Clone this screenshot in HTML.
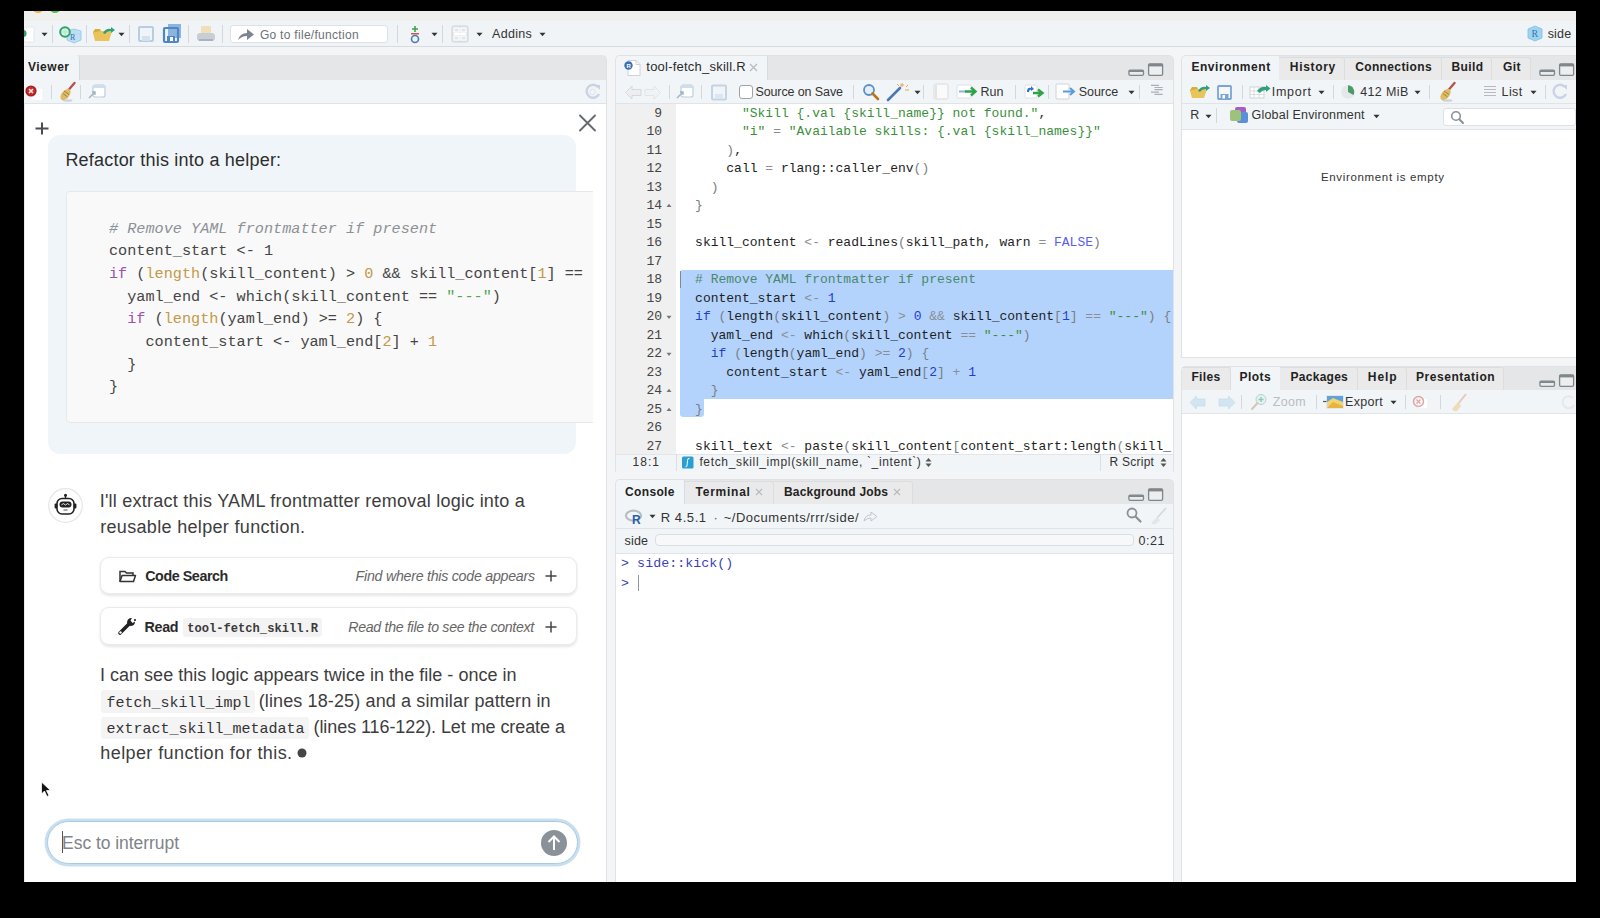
<!DOCTYPE html>
<html><head><meta charset="utf-8"><title>RStudio</title>
<style>
html,body{margin:0;padding:0;}
body{width:1600px;height:918px;background:#000;position:relative;overflow:hidden;font-family:"Liberation Sans",sans-serif;color:#333;}
div{position:absolute;white-space:nowrap;box-sizing:border-box;}
span{white-space:pre;}
svg{overflow:hidden}
</style></head><body>
<div style="left:24px;top:11px;width:1552px;height:871px;background:#f3f5f7"></div>
<div style="left:24px;top:11px;width:1552px;height:10.5px;background:#efefee;border-bottom:1px solid #e0e0e0;box-sizing:border-box"></div>
<svg style="position:absolute;left:24px;top:11px;" width="60" height="4" viewBox="0 0 60 4"><ellipse cx="14" cy="-2" rx="5" ry="4" fill="#f2b43a"/><ellipse cx="31" cy="-2" rx="5" ry="4" fill="#4fc24a"/></svg>
<div style="left:24px;top:21px;width:1552px;height:26px;background:#f1f4f6;border-bottom:1px solid #d6dbdf;box-sizing:border-box"></div>
<svg style="position:absolute;left:24px;top:24px;" width="16" height="20" viewBox="0 0 16 20"><rect x="0" y="3" width="10" height="15" rx="1" fill="#fff" stroke="#e6e6e6"/><circle cx="-1" cy="9.5" r="3.6" fill="#2fa36a"/></svg>
<svg style="position:absolute;left:40.5px;top:32px;" width="7" height="5" viewBox="0 0 7 5"><path d="M0.5 0.8 L6.5 0.8 L3.5 4.2 Z" fill="#333"/></svg>
<div style="left:52px;top:25px;width:1px;height:18px;background:#d4d8dc"></div>
<svg style="position:absolute;left:57px;top:24px;" width="26" height="20" viewBox="0 0 26 20"><path d="M10 7 L17 5 L24 7 L24 16 L17 19 L10 16 Z" fill="#bfe0f4" stroke="#8cc6e6" stroke-width="0.8"/><path d="M17 5 V19 M10 10 L24 10" stroke="#a8d4ee" stroke-width="0.6"/><text x="13" y="15.5" font-size="8" fill="#3d6ea8" font-family="Liberation Serif">R</text><circle cx="8" cy="8" r="4.8" fill="#d8f5e6" stroke="#2ea36a" stroke-width="2"/><path d="M8 5.5 V10.5 M5.5 8 H10.5" stroke="#b9ecd2" stroke-width="1.8"/></svg>
<div style="left:86px;top:25px;width:1px;height:18px;background:#d4d8dc"></div>
<svg style="position:absolute;left:91px;top:24px;" width="26" height="20" viewBox="0 0 26 20"><path d="M2 9 L9 7 L21 7 L18 17 L4 17 Z" fill="#e9c45a"/><path d="M2 8 L4 5 L9 5 L10 7 L2 9 Z" fill="#d8ad3e"/><path d="M12 9 Q15 4 20 5 L20 3 L24 6 L20 9 L20 7 Q16 7 14 10 Z" fill="#2fa07a"/></svg>
<svg style="position:absolute;left:117.5px;top:32px;" width="7" height="5" viewBox="0 0 7 5"><path d="M0.5 0.8 L6.5 0.8 L3.5 4.2 Z" fill="#333"/></svg>
<div style="left:129px;top:25px;width:1px;height:18px;background:#d4d8dc"></div>
<svg style="position:absolute;left:138px;top:25px;" width="16" height="18" viewBox="0 0 16 18"><rect x="1" y="2" width="14" height="14" rx="1" fill="none" stroke="#b8cde3" stroke-width="2"/><rect x="4" y="11" width="8" height="5" fill="#d4e1ee"/></svg>
<svg style="position:absolute;left:162px;top:23px;" width="21" height="21" viewBox="0 0 21 21"><rect x="6" y="1" width="13" height="14" fill="#8bb5dc" /><rect x="2" y="5" width="14" height="14" rx="1" fill="none" stroke="#4f86c6" stroke-width="2.2"/><rect x="5" y="13" width="8" height="6" fill="#4f86c6"/><rect x="8" y="14" width="3" height="4" fill="#fff"/></svg>
<div style="left:188px;top:25px;width:1px;height:18px;background:#d4d8dc"></div>
<svg style="position:absolute;left:196px;top:25px;" width="20" height="18" viewBox="0 0 20 18"><rect x="5" y="1" width="10" height="8" fill="#f0dfb8"/><rect x="1" y="8" width="18" height="8" rx="3" fill="#c7ced6"/><rect x="3" y="14" width="14" height="2" fill="#aab3bd"/></svg>
<div style="left:222px;top:25px;width:1px;height:18px;background:#d4d8dc"></div>
<div style="left:230px;top:25px;width:158px;height:18px;background:#fff;border:1px solid #dde1e5;border-radius:3px;box-sizing:border-box"></div>
<svg style="position:absolute;left:237px;top:28px;" width="18" height="13" viewBox="0 0 18 13"><path d="M1 12 Q3 5 10 5 L10 1 L17 6.5 L10 12 L10 8 Q5 8 1 12 Z" fill="#7d8690"/></svg>
<div style="left:259.9px;top:27.20px;line-height:16px;font-size:12px;color:#6b7178;letter-spacing:0.294px">Go to file/function</div>
<div style="left:397px;top:25px;width:1px;height:18px;background:#d4d8dc"></div>
<svg style="position:absolute;left:406px;top:24px;" width="18" height="20" viewBox="0 0 18 20"><path d="M9 2 V8 M6 5 H12" stroke="#3aa64a" stroke-width="1.6"/><rect x="5" y="9" width="8" height="1.5" fill="#d9534f"/><circle cx="9" cy="15" r="3.5" fill="none" stroke="#4a7ab8" stroke-width="1.6"/></svg>
<svg style="position:absolute;left:430.5px;top:32px;" width="7" height="5" viewBox="0 0 7 5"><path d="M0.5 0.8 L6.5 0.8 L3.5 4.2 Z" fill="#333"/></svg>
<div style="left:442px;top:25px;width:1px;height:18px;background:#d4d8dc"></div>
<svg style="position:absolute;left:451px;top:25px;" width="18" height="18" viewBox="0 0 18 18"><rect x="1" y="1" width="16" height="16" rx="1.5" fill="#e3e6e9" stroke="#cfd4d9"/><path d="M3 8.5 H15 M3 9.5 H15" stroke="#fff" stroke-width="1"/><rect x="3" y="3" width="5" height="4" fill="none" stroke="#fff"/><rect x="10" y="3" width="5" height="4" fill="none" stroke="#fff"/><rect x="3" y="11" width="5" height="4" fill="none" stroke="#fff"/><rect x="10" y="11" width="5" height="4" fill="none" stroke="#fff"/></svg>
<svg style="position:absolute;left:475.5px;top:32px;" width="7" height="5" viewBox="0 0 7 5"><path d="M0.5 0.8 L6.5 0.8 L3.5 4.2 Z" fill="#333"/></svg>
<div style="left:492.0px;top:26.00px;line-height:16px;font-size:12.5px;color:#333;letter-spacing:0.300px">Addins</div>
<svg style="position:absolute;left:538.5px;top:32px;" width="7" height="5" viewBox="0 0 7 5"><path d="M0.5 0.8 L6.5 0.8 L3.5 4.2 Z" fill="#333"/></svg>
<svg style="position:absolute;left:1526px;top:24px;" width="18" height="19" viewBox="0 0 18 19"><path d="M2 5 L9 2 L16 5 L16 14 L9 17 L2 14 Z" fill="#9fd3ee" stroke="#7cc0e6" stroke-width="0.8"/><text x="5.5" y="13" font-size="10" fill="#3a78b5" font-family="Liberation Serif">R</text></svg>
<div style="left:1547.7px;top:26.00px;line-height:16px;font-size:12.5px;color:#333;letter-spacing:0.167px">side</div>
<div style="left:24px;top:55px;width:583px;height:827px;background:linear-gradient(#e4e6e8 0 25px,#fff 25px);border-right:1px solid #dfe2e5;border-left:1px solid #e6e9ec;border-top-right-radius:5px;box-sizing:border-box;overflow:hidden"></div>
<div style="left:24px;top:55px;width:582px;height:25px;background:#e4e6e8;border-top-right-radius:5px"></div>
<div style="left:24px;top:55px;width:56px;height:25px;background:#f2f5f7;border-top-right-radius:4px;border-right:1px solid #d6d9dc;box-sizing:border-box"></div>
<div style="left:28.0px;top:59.00px;line-height:16px;font-size:12px;color:#222;letter-spacing:0.500px;font-weight:bold">Viewer</div>
<div style="left:24px;top:80px;width:582px;height:24px;background:#f2f5f7;border-bottom:1px solid #dfe3e6;box-sizing:border-box"></div>
<svg style="position:absolute;left:24px;top:82px;" width="24" height="18" viewBox="0 0 24 18"><rect x="7" y="6" width="12" height="14" rx="1" fill="#fff" stroke="#eef0f2"/><circle cx="7" cy="9" r="5.6" fill="#a81e1e"/><circle cx="7" cy="9" r="4.2" fill="#c42a2a"/><path d="M5 7 L9 11 M9 7 L5 11" stroke="#fbe3e3" stroke-width="1.7"/></svg>
<div style="left:51px;top:85px;width:1px;height:14px;background:#d4d8dc"></div>
<svg style="position:absolute;left:56px;top:81px;" width="22" height="22" viewBox="0 0 22 22"><ellipse cx="11.5" cy="19.5" rx="5" ry="1.3" fill="#cfd3d6"/><path d="M18.5 2 L12.5 9" stroke="#b8524a" stroke-width="2.4" stroke-linecap="round"/><ellipse cx="9.5" cy="13.5" rx="3.8" ry="6.6" transform="rotate(40 9.5 13.5)" fill="#dcbc68"/><path d="M8 10 L13 13.5 M7 12.5 L11.5 16" stroke="#a88032" stroke-width="1"/></svg>
<div style="left:80px;top:85px;width:1px;height:14px;background:#d4d8dc"></div>
<svg style="position:absolute;left:87px;top:83px;" width="20" height="17" viewBox="0 0 20 17"><rect x="6" y="2" width="12" height="12" rx="2" fill="#fff" stroke="#b9cde0" stroke-width="1.2"/><rect x="6" y="2" width="12" height="3" fill="#d0deeb"/><path d="M2 15 L8 9 M5 9 H8 V12" stroke="#9fb3c6" stroke-width="1.4" fill="none"/></svg>
<svg style="position:absolute;left:584px;top:82px;" width="18" height="19" viewBox="0 0 18 19"><path d="M14 5 A6.5 6.5 0 1 0 15 12" stroke="#c9d3e3" stroke-width="2.4" fill="none"/><path d="M11 3 L16 3 L16 8 Z" fill="#c9d3e3"/><circle cx="8.5" cy="10" r="2.8" fill="none" stroke="#dfe5ee" stroke-width="1"/></svg>
<svg style="position:absolute;left:35px;top:122px;" width="14" height="13" viewBox="0 0 14 13"><path d="M7 0.5 V12.5 M0.5 6.5 H13.5" stroke="#4a4d52" stroke-width="2"/></svg>
<svg style="position:absolute;left:578px;top:114px;" width="19" height="18" viewBox="0 0 19 18"><path d="M2 1.5 L17 16.5 M17 1.5 L2 16.5" stroke="#66696d" stroke-width="1.9" stroke-linecap="round"/></svg>
<div style="left:48px;top:135px;width:528px;height:319px;background:#f0f5f9;border-radius:12px"></div>
<div style="left:65.39999999999999px;top:148.00px;line-height:24px;font-size:18px;color:#2d2d2d;letter-spacing:0.207px">Refactor this into a helper:</div>
<div style="left:66px;top:191px;width:527px;height:232px;overflow:hidden;">
<div style="left:0;top:0;width:600px;height:232px;background:#f9f9f9;border:1px solid #e6e9eb;border-radius:4px;"></div>
<div style="left:43px;top:26.60px;line-height:22px;font-size:15.2px;font-family:'Liberation Mono',monospace;color:#454545;white-space:pre"><span style="color:#8d9196;font-style:italic"># Remove YAML frontmatter if present</span></div>
<div style="left:43px;top:49.26px;line-height:22px;font-size:15.2px;font-family:'Liberation Mono',monospace;color:#454545;white-space:pre">content_start &lt;- 1</div>
<div style="left:43px;top:71.92px;line-height:22px;font-size:15.2px;font-family:'Liberation Mono',monospace;color:#454545;white-space:pre"><span style="color:#a052ad">if</span> (<span style="color:#c39a48">length</span>(skill_content) &gt; <span style="color:#c39a48">0</span> &amp;&amp; skill_content[<span style="color:#c39a48">1</span>] == &quot;---&quot;) {</div>
<div style="left:43px;top:94.58px;line-height:22px;font-size:15.2px;font-family:'Liberation Mono',monospace;color:#454545;white-space:pre">  yaml_end &lt;- which(skill_content == <span style="color:#56a456">&quot;---&quot;</span>)</div>
<div style="left:43px;top:117.24px;line-height:22px;font-size:15.2px;font-family:'Liberation Mono',monospace;color:#454545;white-space:pre">  <span style="color:#a052ad">if</span> (<span style="color:#c39a48">length</span>(yaml_end) &gt;= <span style="color:#c39a48">2</span>) {</div>
<div style="left:43px;top:139.90px;line-height:22px;font-size:15.2px;font-family:'Liberation Mono',monospace;color:#454545;white-space:pre">    content_start &lt;- yaml_end[<span style="color:#c39a48">2</span>] + <span style="color:#c39a48">1</span></div>
<div style="left:43px;top:162.56px;line-height:22px;font-size:15.2px;font-family:'Liberation Mono',monospace;color:#454545;white-space:pre">  }</div>
<div style="left:43px;top:185.22px;line-height:22px;font-size:15.2px;font-family:'Liberation Mono',monospace;color:#454545;white-space:pre">}</div>
</div>
<svg style="position:absolute;left:48px;top:488px;" width="35" height="35" viewBox="0 0 35 35"><circle cx="17.5" cy="17.5" r="16.8" fill="#fff" stroke="#e6e6e6" stroke-width="1.2"/><circle cx="17.5" cy="7.3" r="1.5" fill="#222"/><path d="M17.5 8 V10.5" stroke="#222" stroke-width="1.3"/><rect x="9" y="10.5" width="17" height="15.5" rx="5" fill="#fff" stroke="#222" stroke-width="1.6"/><rect x="6.6" y="15.5" width="2.6" height="5" rx="1" fill="#222"/><rect x="25.8" y="15.5" width="2.6" height="5" rx="1" fill="#222"/><rect x="11.5" y="13.6" width="12" height="5.8" rx="2.9" fill="#222"/><path d="M13.5 16.8 L15.5 15.6 L17.5 17 L19.5 15.6 L21.5 16.8" stroke="#fff" stroke-width="0.9" fill="none"/><rect x="15.5" y="21.5" width="4" height="1" fill="#555"/></svg>
<div style="left:99.7px;top:488.70px;line-height:24px;font-size:18px;color:#3d3d3d;letter-spacing:0.239px">I&#x27;ll extract this YAML frontmatter removal logic into a</div>
<div style="left:100.2px;top:514.50px;line-height:24px;font-size:18px;color:#3d3d3d;letter-spacing:0.325px">reusable helper function.</div>
<div style="left:100px;top:557px;width:477px;height:37px;background:#fff;border:1px solid #ebebeb;border-radius:9px;box-shadow:0 1.5px 3px rgba(0,0,0,0.10);box-sizing:border-box"></div>
<div style="left:100px;top:607px;width:477px;height:38px;background:#fff;border:1px solid #ebebeb;border-radius:9px;box-shadow:0 1.5px 3px rgba(0,0,0,0.10);box-sizing:border-box"></div>
<svg style="position:absolute;left:118px;top:569px;" width="19" height="14" viewBox="0 0 19 14"><path d="M2 12.5 V2.5 H7 L8.5 4 H15 V6" stroke="#333" stroke-width="1.5" fill="none"/><path d="M2 12.5 L4 6.5 H17.5 L15.5 12.5 Z" stroke="#333" stroke-width="1.5" fill="none" stroke-linejoin="round"/></svg>
<div style="left:145.2px;top:567.00px;line-height:18px;font-size:14.3px;color:#2a2a2a;letter-spacing:-0.430px;font-weight:bold">Code Search</div>
<div style="left:355.6px;top:567.00px;line-height:18px;font-size:14.2px;color:#666;letter-spacing:-0.248px;font-style:italic">Find where this code appears</div>
<svg style="position:absolute;left:545px;top:570px;" width="12" height="12" viewBox="0 0 12 12"><path d="M6 0.5 V11.5 M0.5 6 H11.5" stroke="#444" stroke-width="1.5"/></svg>
<svg style="position:absolute;left:117px;top:616px;" width="21" height="20" viewBox="0 0 21 20"><path d="M3 17 L12 8" stroke="#222" stroke-width="3.6" stroke-linecap="round"/><circle cx="3.5" cy="16.5" r="1.2" fill="#fff"/><path d="M10 7 Q10 2 15 2 L13.5 4.5 L15.5 7 L18 5.5 Q18 10 13 10" fill="#222"/><circle cx="18" cy="4" r="1.1" fill="#222"/></svg>
<div style="left:144.6px;top:617.50px;line-height:18px;font-size:14.3px;color:#2a2a2a;letter-spacing:-0.367px;font-weight:bold">Read</div>
<div style="left:182.5px;top:617.5px;width:139.5px;height:19.5px;background:#f3f3f3;border-radius:3px"></div>
<div style="left:187.3px;top:621.00px;line-height:16px;font-size:12.1px;font-family:'Liberation Mono',monospace;font-weight:bold;color:#3a3a3a">tool-fetch_skill.R</div>
<div style="left:348.20000000000005px;top:617.50px;line-height:18px;font-size:14.2px;color:#666;letter-spacing:-0.306px;font-style:italic">Read the file to see the context</div>
<svg style="position:absolute;left:545px;top:620.5px;" width="12" height="12" viewBox="0 0 12 12"><path d="M6 0.5 V11.5 M0.5 6 H11.5" stroke="#444" stroke-width="1.5"/></svg>
<div style="left:99.9px;top:662.50px;line-height:24px;font-size:18px;color:#3d3d3d;letter-spacing:0.027px">I can see this logic appears twice in the file - once in</div>
<div style="left:100.75px;top:690.3px;width:154.45px;height:22.5px;background:#f4f4f4;border-radius:3px"></div>
<div style="left:106.5px;top:694.00px;line-height:20px;font-size:15px;font-family:'Liberation Mono',monospace;color:#333">fetch_skill_impl</div>
<div style="left:258.65px;top:688.50px;line-height:24px;font-size:18px;color:#3d3d3d;letter-spacing:0.131px">(lines 18-25) and a similar pattern in</div>
<div style="left:100.75px;top:716.5px;width:208.5px;height:22.5px;background:#f4f4f4;border-radius:3px"></div>
<div style="left:106.5px;top:720.00px;line-height:20px;font-size:15px;font-family:'Liberation Mono',monospace;color:#333">extract_skill_metadata</div>
<div style="left:313.5px;top:714.50px;line-height:24px;font-size:18px;color:#3d3d3d;letter-spacing:-0.077px">(lines 116-122). Let me create a</div>
<div style="left:100.3px;top:740.50px;line-height:24px;font-size:18px;color:#3d3d3d;letter-spacing:0.404px">helper function for this.</div>
<svg style="position:absolute;left:297px;top:748px;" width="10" height="10" viewBox="0 0 10 10"><circle cx="5" cy="5" r="4.5" fill="#444"/></svg>
<svg style="position:absolute;left:40px;top:781px;" width="12" height="17" viewBox="0 0 12 17"><path d="M1.5 1 L1.5 13 L4.5 10 L7 15.5 L9 14.5 L6.5 9.5 L10.5 9.5 Z" fill="#111" stroke="#fff" stroke-width="0.8"/></svg>
<div style="left:47px;top:820.5px;width:530.5px;height:43.0px;background:#fff;border:1.5px solid #a6cbe6;border-radius:22px;box-shadow:0 0 0 2.5px #c9dfee;box-sizing:border-box"></div>
<div style="left:62.1px;top:831.50px;line-height:22px;font-size:17.5px;color:#808389;letter-spacing:-0.047px">Esc to interrupt</div>
<div style="left:62px;top:831px;width:1.2999999999999972px;height:22px;background:#555"></div>
<svg style="position:absolute;left:541px;top:830px;" width="26" height="26" viewBox="0 0 26 26"><circle cx="13" cy="13" r="13" fill="#8b9199"/><path d="M13 20 V6.5 M7.5 12 L13 6.5 L18.5 12" stroke="#fff" stroke-width="2" fill="none"/></svg>
<div style="left:615px;top:55px;width:559px;height:417px;background:linear-gradient(#e4e6e8 0 25px,#fff 25px);border:1px solid #e0e3e6;border-radius:5px 5px 0 0;box-sizing:border-box;overflow:hidden"></div>
<div style="left:616px;top:56px;width:557px;height:24px;background:#e4e6e8;border-top-right-radius:4px"></div>
<div style="left:616px;top:56px;width:152px;height:24px;background:#f2f5f7;border-right:1px solid #d9dcdf;border-top-left-radius:4px;box-sizing:border-box"></div>
<svg style="position:absolute;left:623px;top:58px;" width="20" height="20" viewBox="0 0 20 20"><path d="M5 2.5 H13 L17 6.5 V17.5 H5 Z" fill="#fff" stroke="#c9cdd1" stroke-width="0.9"/><path d="M13 2.5 V6.5 H17" fill="none" stroke="#c9cdd1" stroke-width="0.9"/><circle cx="5.5" cy="7.5" r="4.2" fill="#3d6fb6"/><text x="3.4" y="9.8" font-size="6" fill="#fff" font-family="Liberation Sans" font-weight="bold">R</text></svg>
<div style="left:646.3px;top:57.50px;line-height:18px;font-size:13px;color:#2b2b2b;letter-spacing:0.229px">tool-fetch_skill.R</div>
<svg style="position:absolute;left:749px;top:63px;" width="9" height="9" viewBox="0 0 9 9"><path d="M1 1 L8 8 M8 1 L1 8" stroke="#b7bcc1" stroke-width="1.3"/></svg>
<svg style="position:absolute;left:1128px;top:62px;" width="38" height="15" viewBox="0 0 38 15"><rect x="0.9" y="8.2" width="14.6" height="5.2" rx="1.3" fill="#e9ebec" stroke="#7f868c" stroke-width="1.3"/><rect x="0.9" y="8.2" width="14.6" height="1.8" fill="#7f868c"/><rect x="20.6" y="1.8" width="14" height="11.6" rx="1.3" fill="#eceeef" stroke="#7f868c" stroke-width="1.3"/><rect x="20.6" y="1.8" width="14" height="2.6" fill="#7f868c"/></svg>
<div style="left:616px;top:80px;width:557px;height:24px;background:#f2f5f7;border-bottom:1px solid #e1e4e7;box-sizing:border-box"></div>
<svg style="position:absolute;left:624px;top:85px;" width="38" height="16" viewBox="0 0 38 16"><path d="M1.5 7.5 L8 1 V4.5 H17 V10.5 H8 V14 Z" fill="#eceef0" stroke="#d2d5d8" stroke-width="0.9"/><path d="M36.5 7.5 L30 1 V4.5 H21 V10.5 H30 V14 Z" fill="#f0f2f4" stroke="#e0e3e6" stroke-width="0.9"/></svg>
<div style="left:668.5px;top:85px;width:1.0px;height:14px;background:#d4d8dc"></div>
<svg style="position:absolute;left:675px;top:83px;" width="20" height="17" viewBox="0 0 20 17"><rect x="6" y="2" width="12" height="12" rx="2" fill="#fff" stroke="#b9cde0" stroke-width="1.2"/><rect x="6" y="2" width="12" height="3" fill="#d0deeb"/><path d="M2 15 L8 9 M5 9 H8 V12" stroke="#9fb3c6" stroke-width="1.4" fill="none"/></svg>
<div style="left:701px;top:85px;width:1px;height:14px;background:#d4d8dc"></div>
<svg style="position:absolute;left:711px;top:84px;" width="16" height="17" viewBox="0 0 16 17"><rect x="1" y="1.5" width="14" height="14" rx="1" fill="none" stroke="#c3d4e6" stroke-width="2"/><rect x="4" y="10" width="8" height="5" fill="#dbe6f0"/></svg>
<div style="left:739px;top:85px;width:13.5px;height:14px;background:#fff;border:1px solid #9ea4aa;border-radius:3px;box-sizing:border-box"></div>
<div style="left:755.4px;top:83.60px;line-height:16px;font-size:12.5px;color:#333;letter-spacing:-0.100px">Source on Save</div>
<div style="left:853px;top:85px;width:1px;height:14px;background:#d4d8dc"></div>
<svg style="position:absolute;left:862px;top:83px;" width="18" height="18" viewBox="0 0 18 18"><circle cx="7" cy="7" r="5" fill="#e3f0fb" stroke="#5a8fc9" stroke-width="1.8"/><path d="M10.5 10.5 L16 16" stroke="#b8741f" stroke-width="2.6" stroke-linecap="round"/></svg>
<svg style="position:absolute;left:886px;top:82px;" width="24" height="20" viewBox="0 0 24 20"><path d="M2 18 L14 6" stroke="#4a78b8" stroke-width="2.6" stroke-linecap="round"/><path d="M16 1 V5 M14 3 H18 M20 5 L22 3 M19 8 H23 M11 2 L13 4" stroke="#f0a050" stroke-width="1"/></svg>
<svg style="position:absolute;left:913.5px;top:90px;" width="7" height="5" viewBox="0 0 7 5"><path d="M0.5 0.8 L6.5 0.8 L3.5 4.2 Z" fill="#333"/></svg>
<div style="left:923px;top:85px;width:1px;height:14px;background:#d4d8dc"></div>
<svg style="position:absolute;left:932px;top:83px;" width="18" height="17" viewBox="0 0 18 17"><rect x="2" y="1" width="14" height="15" rx="1.5" fill="#fafafa" stroke="#d8dadd"/><path d="M4 2 V15" stroke="#c9ccd0"/></svg>
<svg style="position:absolute;left:956px;top:84px;" width="26" height="15" viewBox="0 0 26 15"><rect x="1" y="1" width="14" height="13" rx="1" fill="#fff" stroke="#dde1e4"/><path d="M3 7.5 H10" stroke="#8fb2e0" stroke-width="2"/><path d="M9 7.5 H18 M15 3.5 L19.5 7.5 L15 11.5" stroke="#2fa34a" stroke-width="2.4" fill="none"/></svg>
<div style="left:980.5px;top:83.60px;line-height:16px;font-size:12.5px;color:#333;letter-spacing:-0.050px">Run</div>
<div style="left:1015px;top:85px;width:1px;height:14px;background:#d4d8dc"></div>
<svg style="position:absolute;left:1022px;top:83px;" width="24" height="17" viewBox="0 0 24 17"><rect x="3" y="2" width="12" height="13" rx="1" fill="#fff" stroke="#dde1e4"/><path d="M5 9 Q5 4 9 5 L9 3 L12 6 L9 8 V6.5 Q7 6.5 7 9 Z" fill="#2f6fd0"/><path d="M11 10 H19 M16 6.5 L20.5 10 L16 13.5" stroke="#2fa34a" stroke-width="2.4" fill="none"/></svg>
<div style="left:1048px;top:85px;width:1px;height:14px;background:#d4d8dc"></div>
<svg style="position:absolute;left:1055px;top:83px;" width="24" height="17" viewBox="0 0 24 17"><rect x="1" y="1" width="13" height="15" rx="1" fill="#fff" stroke="#cfd4d8"/><path d="M8 8.5 H18 M15 5 L19 8.5 L15 12" stroke="#5b9be0" stroke-width="2" fill="none"/></svg>
<div style="left:1078.8px;top:83.60px;line-height:16px;font-size:12.5px;color:#333;letter-spacing:-0.060px">Source</div>
<svg style="position:absolute;left:1127.5px;top:90px;" width="7" height="5" viewBox="0 0 7 5"><path d="M0.5 0.8 L6.5 0.8 L3.5 4.2 Z" fill="#333"/></svg>
<div style="left:1139px;top:85px;width:1px;height:14px;background:#d4d8dc"></div>
<svg style="position:absolute;left:1149px;top:84px;" width="16" height="14" viewBox="0 0 16 14"><path d="M2 1.4 H10 M5.5 3.5 H13.7 M5.5 5.6 H13.7 M2 8.1 H10 M5.5 10.3 H13.7" stroke="#a9afb5" stroke-width="1.2"/></svg>
<div style="left:616px;top:104px;width:60px;height:349.5px;background:#f0f0f0"></div>
<div style="left:676px;top:104px;width:497px;height:349.5px;background:#fff"></div>
<div style="left:679.5px;top:269.75px;width:493.5px;height:129.5px;background:#b3d3fd;border-radius:3px 0 0 0"></div>
<div style="left:679.5px;top:399px;width:24.0px;height:18px;background:#b3d3fd;border-radius:0 0 3px 3px"></div>
<div style="left:680px;top:270.5px;width:1.2999999999999545px;height:17.0px;background:#7d8a99"></div>
<div style="left:616px;top:104px;width:557px;height:349.5px;overflow:hidden">
<div style="right:511px;top:0.50px;line-height:18px;font-size:13px;font-family:'Liberation Mono',monospace;color:#444;text-align:right">9</div>
<div style="left:63.5px;top:0.50px;line-height:18px;font-size:13px;font-family:'Liberation Mono',monospace;color:#1e1e1e;white-space:pre">        <span style="color:#3b8f3b">&quot;Skill {.val {skill_name}} not found.&quot;</span>,</div>
<div style="right:511px;top:19.00px;line-height:18px;font-size:13px;font-family:'Liberation Mono',monospace;color:#444;text-align:right">10</div>
<div style="left:63.5px;top:19.00px;line-height:18px;font-size:13px;font-family:'Liberation Mono',monospace;color:#1e1e1e;white-space:pre">        <span style="color:#3b8f3b">&quot;i&quot;</span> <span style="color:#8a8e93">=</span> <span style="color:#3b8f3b">&quot;Available skills: {.val {skill_names}}&quot;</span></div>
<div style="right:511px;top:37.50px;line-height:18px;font-size:13px;font-family:'Liberation Mono',monospace;color:#444;text-align:right">11</div>
<div style="left:63.5px;top:37.50px;line-height:18px;font-size:13px;font-family:'Liberation Mono',monospace;color:#1e1e1e;white-space:pre">      <span style="color:#7b7f84">)</span>,</div>
<div style="right:511px;top:56.00px;line-height:18px;font-size:13px;font-family:'Liberation Mono',monospace;color:#444;text-align:right">12</div>
<div style="left:63.5px;top:56.00px;line-height:18px;font-size:13px;font-family:'Liberation Mono',monospace;color:#1e1e1e;white-space:pre">      call <span style="color:#8a8e93">=</span> rlang::caller_env<span style="color:#7b7f84">()</span></div>
<div style="right:511px;top:74.50px;line-height:18px;font-size:13px;font-family:'Liberation Mono',monospace;color:#444;text-align:right">13</div>
<div style="left:63.5px;top:74.50px;line-height:18px;font-size:13px;font-family:'Liberation Mono',monospace;color:#1e1e1e;white-space:pre">    <span style="color:#7b7f84">)</span></div>
<div style="right:511px;top:93.00px;line-height:18px;font-size:13px;font-family:'Liberation Mono',monospace;color:#444;text-align:right">14</div>
<svg style="position:absolute;left:50px;top:99.00px" width="6" height="5"><path d="M0.5 4 L3 0.8 L5.5 4 Z" fill="#777"/></svg>
<div style="left:63.5px;top:93.00px;line-height:18px;font-size:13px;font-family:'Liberation Mono',monospace;color:#1e1e1e;white-space:pre">  <span style="color:#7b7f84">}</span></div>
<div style="right:511px;top:111.50px;line-height:18px;font-size:13px;font-family:'Liberation Mono',monospace;color:#444;text-align:right">15</div>
<div style="left:63.5px;top:111.50px;line-height:18px;font-size:13px;font-family:'Liberation Mono',monospace;color:#1e1e1e;white-space:pre"></div>
<div style="right:511px;top:130.00px;line-height:18px;font-size:13px;font-family:'Liberation Mono',monospace;color:#444;text-align:right">16</div>
<div style="left:63.5px;top:130.00px;line-height:18px;font-size:13px;font-family:'Liberation Mono',monospace;color:#1e1e1e;white-space:pre">  skill_content <span style="color:#8a8e93">&lt;-</span> readLines<span style="color:#7b7f84">(</span>skill_path, warn <span style="color:#8a8e93">=</span> <span style="color:#585cf6">FALSE</span><span style="color:#7b7f84">)</span></div>
<div style="right:511px;top:148.50px;line-height:18px;font-size:13px;font-family:'Liberation Mono',monospace;color:#444;text-align:right">17</div>
<div style="left:63.5px;top:148.50px;line-height:18px;font-size:13px;font-family:'Liberation Mono',monospace;color:#1e1e1e;white-space:pre"></div>
<div style="right:511px;top:167.00px;line-height:18px;font-size:13px;font-family:'Liberation Mono',monospace;color:#444;text-align:right">18</div>
<div style="left:63.5px;top:167.00px;line-height:18px;font-size:13px;font-family:'Liberation Mono',monospace;color:#1e1e1e;white-space:pre">  <span style="color:#4c886b"># Remove YAML frontmatter if present</span></div>
<div style="right:511px;top:185.50px;line-height:18px;font-size:13px;font-family:'Liberation Mono',monospace;color:#444;text-align:right">19</div>
<div style="left:63.5px;top:185.50px;line-height:18px;font-size:13px;font-family:'Liberation Mono',monospace;color:#1e1e1e;white-space:pre">  content_start <span style="color:#8a8e93">&lt;-</span> <span style="color:#1f3fd0">1</span></div>
<div style="right:511px;top:204.00px;line-height:18px;font-size:13px;font-family:'Liberation Mono',monospace;color:#444;text-align:right">20</div>
<svg style="position:absolute;left:50px;top:211.00px" width="6" height="5"><path d="M0.5 0.8 L3 4 L5.5 0.8 Z" fill="#777"/></svg>
<div style="left:63.5px;top:204.00px;line-height:18px;font-size:13px;font-family:'Liberation Mono',monospace;color:#1e1e1e;white-space:pre">  <span style="color:#1f3fd0">if</span> <span style="color:#7b7f84">(</span>length<span style="color:#7b7f84">(</span>skill_content<span style="color:#7b7f84">)</span> <span style="color:#8a8e93">&gt;</span> <span style="color:#1f3fd0">0</span> <span style="color:#8a8e93">&amp;&amp;</span> skill_content<span style="color:#7b7f84">[</span><span style="color:#1f3fd0">1</span><span style="color:#7b7f84">]</span> <span style="color:#8a8e93">==</span> <span style="color:#3b8f3b">&quot;---&quot;</span><span style="color:#7b7f84">)</span> <span style="color:#7b7f84">{</span></div>
<div style="right:511px;top:222.50px;line-height:18px;font-size:13px;font-family:'Liberation Mono',monospace;color:#444;text-align:right">21</div>
<div style="left:63.5px;top:222.50px;line-height:18px;font-size:13px;font-family:'Liberation Mono',monospace;color:#1e1e1e;white-space:pre">    yaml_end <span style="color:#8a8e93">&lt;-</span> which<span style="color:#7b7f84">(</span>skill_content <span style="color:#8a8e93">==</span> <span style="color:#3b8f3b">&quot;---&quot;</span><span style="color:#7b7f84">)</span></div>
<div style="right:511px;top:241.00px;line-height:18px;font-size:13px;font-family:'Liberation Mono',monospace;color:#444;text-align:right">22</div>
<svg style="position:absolute;left:50px;top:248.00px" width="6" height="5"><path d="M0.5 0.8 L3 4 L5.5 0.8 Z" fill="#777"/></svg>
<div style="left:63.5px;top:241.00px;line-height:18px;font-size:13px;font-family:'Liberation Mono',monospace;color:#1e1e1e;white-space:pre">    <span style="color:#1f3fd0">if</span> <span style="color:#7b7f84">(</span>length<span style="color:#7b7f84">(</span>yaml_end<span style="color:#7b7f84">)</span> <span style="color:#8a8e93">&gt;=</span> <span style="color:#1f3fd0">2</span><span style="color:#7b7f84">)</span> <span style="color:#7b7f84">{</span></div>
<div style="right:511px;top:259.50px;line-height:18px;font-size:13px;font-family:'Liberation Mono',monospace;color:#444;text-align:right">23</div>
<div style="left:63.5px;top:259.50px;line-height:18px;font-size:13px;font-family:'Liberation Mono',monospace;color:#1e1e1e;white-space:pre">      content_start <span style="color:#8a8e93">&lt;-</span> yaml_end<span style="color:#7b7f84">[</span><span style="color:#1f3fd0">2</span><span style="color:#7b7f84">]</span> <span style="color:#8a8e93">+</span> <span style="color:#1f3fd0">1</span></div>
<div style="right:511px;top:278.00px;line-height:18px;font-size:13px;font-family:'Liberation Mono',monospace;color:#444;text-align:right">24</div>
<svg style="position:absolute;left:50px;top:284.00px" width="6" height="5"><path d="M0.5 4 L3 0.8 L5.5 4 Z" fill="#777"/></svg>
<div style="left:63.5px;top:278.00px;line-height:18px;font-size:13px;font-family:'Liberation Mono',monospace;color:#1e1e1e;white-space:pre">    <span style="color:#7b7f84">}</span></div>
<div style="right:511px;top:296.50px;line-height:18px;font-size:13px;font-family:'Liberation Mono',monospace;color:#444;text-align:right">25</div>
<svg style="position:absolute;left:50px;top:302.50px" width="6" height="5"><path d="M0.5 4 L3 0.8 L5.5 4 Z" fill="#777"/></svg>
<div style="left:63.5px;top:296.50px;line-height:18px;font-size:13px;font-family:'Liberation Mono',monospace;color:#1e1e1e;white-space:pre">  <span style="color:#7b7f84">}</span></div>
<div style="right:511px;top:315.00px;line-height:18px;font-size:13px;font-family:'Liberation Mono',monospace;color:#444;text-align:right">26</div>
<div style="left:63.5px;top:315.00px;line-height:18px;font-size:13px;font-family:'Liberation Mono',monospace;color:#1e1e1e;white-space:pre"></div>
<div style="right:511px;top:333.50px;line-height:18px;font-size:13px;font-family:'Liberation Mono',monospace;color:#444;text-align:right">27</div>
<div style="left:63.5px;top:333.50px;line-height:18px;font-size:13px;font-family:'Liberation Mono',monospace;color:#1e1e1e;white-space:pre">  skill_text <span style="color:#8a8e93">&lt;-</span> paste<span style="color:#7b7f84">(</span>skill_content<span style="color:#7b7f84">[</span>content_start:length<span style="color:#7b7f84">(</span>skill_</div>
</div>
<div style="left:616px;top:453.5px;width:557px;height:18.0px;background:#f2f5f7;border-top:1px solid #e3e6e9;box-sizing:border-box"></div>
<div style="left:632.6px;top:455.00px;line-height:14px;font-size:12px;color:#333;letter-spacing:0.967px">18:1</div>
<div style="left:676px;top:454px;width:1px;height:17px;background:#dcdfe2"></div>
<svg style="position:absolute;left:682px;top:456px;" width="12" height="13" viewBox="0 0 12 13"><rect x="0" y="0.5" width="11.5" height="12" rx="1.5" fill="#2aa0d2"/><path d="M7.5 2.5 Q5.5 2 5.5 4.5 L5 10 Q4.8 11 3.5 10.8" stroke="#fff" stroke-width="1" fill="none"/></svg>
<div style="left:699.4px;top:455.00px;line-height:14px;font-size:12px;color:#333;letter-spacing:0.650px">fetch_skill_impl(skill_name, `_intent`)</div>
<svg style="position:absolute;left:925px;top:457px;" width="7" height="11" viewBox="0 0 7 11"><path d="M0.5 4.5 L3.5 1 L6.5 4.5 Z M0.5 6.5 L3.5 10 L6.5 6.5 Z" fill="#555"/></svg>
<div style="left:1100px;top:454px;width:1px;height:17px;background:#dcdfe2"></div>
<div style="left:1109.6px;top:455.00px;line-height:14px;font-size:12px;color:#333;letter-spacing:0.229px">R Script</div>
<svg style="position:absolute;left:1160px;top:457px;" width="7" height="11" viewBox="0 0 7 11"><path d="M0.5 4.5 L3.5 1 L6.5 4.5 Z M0.5 6.5 L3.5 10 L6.5 6.5 Z" fill="#555"/></svg>
<div style="left:615px;top:479px;width:559px;height:403px;background:linear-gradient(#e4e6e8 0 25px,#fff 25px);border:1px solid #e0e3e6;border-bottom:none;border-radius:5px 5px 0 0;box-sizing:border-box"></div>
<div style="left:616px;top:480px;width:557px;height:24px;background:#e4e6e8;border-top-right-radius:4px"></div>
<div style="left:616px;top:480px;width:68px;height:24px;background:#f2f5f7;border-top-left-radius:4px;box-sizing:border-box"></div>
<div style="left:684px;top:480px;width:1px;height:24px;background:#d9dcdf"></div>
<div style="left:685px;top:481px;width:89px;height:23px;background:#eaeaea;border:1px solid #dcdddf;border-bottom:none;border-left:none;border-radius:0 3px 0 0"></div>
<div style="left:774px;top:481px;width:139px;height:23px;background:#eaeaea;border:1px solid #dcdddf;border-bottom:none;border-left:none;border-radius:0 3px 0 0"></div>
<div style="left:625.0px;top:483.50px;line-height:16px;font-size:12px;color:#222;letter-spacing:0.350px;font-weight:bold">Console</div>
<div style="left:695.6px;top:483.50px;line-height:16px;font-size:12px;color:#222;letter-spacing:0.743px;font-weight:bold">Terminal</div>
<svg style="position:absolute;left:755px;top:487.5px;" width="8" height="8" viewBox="0 0 8 8"><path d="M1 1 L7 7 M7 1 L1 7" stroke="#b7bcc1" stroke-width="1.2"/></svg>
<div style="left:784.0px;top:483.50px;line-height:16px;font-size:12px;color:#222;letter-spacing:0.186px;font-weight:bold">Background Jobs</div>
<svg style="position:absolute;left:893px;top:487.5px;" width="8" height="8" viewBox="0 0 8 8"><path d="M1 1 L7 7 M7 1 L1 7" stroke="#b7bcc1" stroke-width="1.2"/></svg>
<svg style="position:absolute;left:1128px;top:487px;" width="38" height="15" viewBox="0 0 38 15"><rect x="0.9" y="8.2" width="14.6" height="5.2" rx="1.3" fill="#e9ebec" stroke="#7f868c" stroke-width="1.3"/><rect x="0.9" y="8.2" width="14.6" height="1.8" fill="#7f868c"/><rect x="20.6" y="1.8" width="14" height="11.6" rx="1.3" fill="#eceeef" stroke="#7f868c" stroke-width="1.3"/><rect x="20.6" y="1.8" width="14" height="2.6" fill="#7f868c"/></svg>
<div style="left:616px;top:504px;width:557px;height:24.799999999999955px;background:#f2f5f7;border-bottom:1px solid #e1e4e7;box-sizing:border-box"></div>
<svg style="position:absolute;left:623px;top:507px;" width="22" height="18" viewBox="0 0 22 18"><ellipse cx="10.5" cy="8.6" rx="7.6" ry="5" fill="none" stroke="#b9bcc0" stroke-width="2.2"/><text x="9" y="16.6" font-size="12" font-weight="bold" fill="#2a5fae" font-family="Liberation Sans">R</text></svg>
<svg style="position:absolute;left:648.5px;top:514px;" width="7" height="5" viewBox="0 0 7 5"><path d="M0.5 0.8 L6.5 0.8 L3.5 4.2 Z" fill="#333"/></svg>
<div style="left:660.7px;top:509.70px;line-height:16px;font-size:13px;color:#333;letter-spacing:0.583px">R 4.5.1</div>
<div style="left:713.5px;top:509.70px;line-height:16px;font-size:13px;color:#555">·</div>
<div style="left:723.7px;top:509.70px;line-height:16px;font-size:13px;color:#333;letter-spacing:0.510px">~/Documents/rrr/side/</div>
<svg style="position:absolute;left:863px;top:510px;" width="15" height="12" viewBox="0 0 15 12"><path d="M1 11 Q2 5 8 5 L8 2 L14 6.5 L8 11 L8 8 Q4 8 1 11 Z" fill="none" stroke="#c0c6cc" stroke-width="1"/></svg>
<svg style="position:absolute;left:1126px;top:507px;" width="16" height="16" viewBox="0 0 16 16"><circle cx="6" cy="6" r="4.5" fill="none" stroke="#8a9096" stroke-width="1.8"/><path d="M9.5 9.5 L14.5 14.5" stroke="#8a9096" stroke-width="2.2" stroke-linecap="round"/></svg>
<svg style="position:absolute;left:1148px;top:506px;" width="20" height="20" viewBox="0 0 20 20"><path d="M18 2 L9 12" stroke="#d5d9dd" stroke-width="1.8"/><path d="M9 11 L3 17 Q5 19 8 18 L12 14 Z" fill="#e3e6e9"/></svg>
<div style="left:616px;top:528.8px;width:557px;height:25.700000000000045px;background:#f2f5f7;border-bottom:1px solid #e1e4e7;box-sizing:border-box"></div>
<div style="left:624.6px;top:533.00px;line-height:16px;font-size:12.5px;color:#333;letter-spacing:0.133px">side</div>
<div style="left:654.7px;top:534px;width:479.29999999999995px;height:12px;background:#f6f8fa;border:1px solid #dadee2;border-radius:4px;box-sizing:border-box"></div>
<div style="left:1138.6px;top:533.00px;line-height:16px;font-size:12.5px;color:#333;letter-spacing:0.533px">0:21</div>
<div style="left:621.0999999999999px;top:555.30px;line-height:18px;font-size:13.3px;color:#3b3fb8;letter-spacing:0.031px;font-family:'Liberation Mono',monospace">&gt; side::kick()</div>
<div style="left:621px;top:575.30px;line-height:18px;font-size:13.3px;font-family:'Liberation Mono',monospace;color:#3b3fb8">&gt;</div>
<div style="left:637.5px;top:574.6px;width:1.2000000000000455px;height:16.899999999999977px;background:#8d97a3"></div>
<div style="left:1181px;top:55px;width:395px;height:303px;background:linear-gradient(#f2f5f7 0 25px,#fff 25px);border:1px solid #e0e3e6;border-right:none;border-radius:5px 0 0 0;box-sizing:border-box"></div>
<div style="left:1182px;top:56px;width:394px;height:24px;background:#e4e6e8"></div>
<div style="left:1182px;top:56px;width:97px;height:24px;background:#f2f5f7;border-top-left-radius:4px"></div>
<div style="left:1279px;top:57px;width:66px;height:23px;background:#eaeaea;border:1px solid #dcdddf;border-bottom:none;border-left:none;border-radius:0 3px 0 0"></div>
<div style="left:1345px;top:57px;width:97px;height:23px;background:#eaeaea;border:1px solid #dcdddf;border-bottom:none;border-left:none;border-radius:0 3px 0 0"></div>
<div style="left:1442px;top:57px;width:50px;height:23px;background:#eaeaea;border:1px solid #dcdddf;border-bottom:none;border-left:none;border-radius:0 3px 0 0"></div>
<div style="left:1492px;top:57px;width:39px;height:23px;background:#eaeaea;border:1px solid #dcdddf;border-bottom:none;border-left:none;border-radius:0 3px 0 0"></div>
<div style="left:1191.4px;top:58.60px;line-height:16px;font-size:12px;color:#222;letter-spacing:0.540px;font-weight:bold">Environment</div>
<div style="left:1289.8px;top:58.60px;line-height:16px;font-size:12px;color:#222;letter-spacing:0.667px;font-weight:bold">History</div>
<div style="left:1355.1999999999998px;top:58.60px;line-height:16px;font-size:12px;color:#222;letter-spacing:0.370px;font-weight:bold">Connections</div>
<div style="left:1451.4px;top:58.60px;line-height:16px;font-size:12px;color:#222;letter-spacing:0.400px;font-weight:bold">Build</div>
<div style="left:1503.0px;top:58.60px;line-height:16px;font-size:12px;color:#222;letter-spacing:0.450px;font-weight:bold">Git</div>
<svg style="position:absolute;left:1539px;top:62px;" width="38" height="15" viewBox="0 0 38 15"><rect x="0.9" y="8.2" width="14.6" height="5.2" rx="1.3" fill="#e9ebec" stroke="#7f868c" stroke-width="1.3"/><rect x="0.9" y="8.2" width="14.6" height="1.8" fill="#7f868c"/><rect x="20.6" y="1.8" width="14" height="11.6" rx="1.3" fill="#eceeef" stroke="#7f868c" stroke-width="1.3"/><rect x="20.6" y="1.8" width="14" height="2.6" fill="#7f868c"/></svg>
<div style="left:1182px;top:80px;width:394px;height:24px;background:#f2f5f7;border-bottom:1px solid #e1e4e7;box-sizing:border-box"></div>
<svg style="position:absolute;left:1188px;top:82px;" width="24" height="18" viewBox="0 0 24 18"><path d="M2 9 L9 7 L19 7 L16 16 L4 16 Z" fill="#e9c45a"/><path d="M2 8 L4 5 L9 5 L10 7 L2 9 Z" fill="#d8ad3e"/><path d="M10 9 Q13 4 18 5 L18 3 L22 6 L18 9 L18 7 Q14 7 12 10 Z" fill="#2fa07a"/></svg>
<svg style="position:absolute;left:1217px;top:85px;" width="16" height="16" viewBox="0 0 16 16"><rect x="1" y="1" width="13" height="13" rx="0.8" fill="#f4f8fc" stroke="#7aa5d6" stroke-width="1.8"/><rect x="3.5" y="9" width="8" height="5" fill="#7aa5d6"/><rect x="5.5" y="10" width="2.5" height="3.5" fill="#fff"/></svg>
<div style="left:1242px;top:85px;width:1px;height:14px;background:#d4d8dc"></div>
<svg style="position:absolute;left:1249px;top:83px;" width="24" height="16" viewBox="0 0 24 16"><rect x="1" y="4" width="14" height="11" fill="#fff" stroke="#cfd5db"/><path d="M1 8 H15 M1 11.5 H15 M5 4 V15 M10 4 V15" stroke="#cfd5db" stroke-width="0.8"/><path d="M8 8 Q12 3 17 4 L17 2 L21.5 5.5 L17 9 L17 7 Q13 7 11 10 Z" fill="#2fa07a"/></svg>
<div style="left:1271.7px;top:83.80px;line-height:16px;font-size:12.5px;color:#333;letter-spacing:0.760px">Import</div>
<svg style="position:absolute;left:1317.5px;top:90px;" width="7" height="5" viewBox="0 0 7 5"><path d="M0.5 0.8 L6.5 0.8 L3.5 4.2 Z" fill="#333"/></svg>
<div style="left:1333px;top:85px;width:1px;height:14px;background:#d4d8dc"></div>
<svg style="position:absolute;left:1340px;top:84px;" width="16" height="16" viewBox="0 0 16 16"><circle cx="8" cy="8" r="6.8" fill="#e5e7e9"/><path d="M8 8 L8 1.2 A6.8 6.8 0 0 1 13.5 11 Z" fill="#4a9a6a"/></svg>
<div style="left:1360.2px;top:83.80px;line-height:16px;font-size:12.5px;color:#333;letter-spacing:0.367px">412 MiB</div>
<svg style="position:absolute;left:1413.5px;top:90px;" width="7" height="5" viewBox="0 0 7 5"><path d="M0.5 0.8 L6.5 0.8 L3.5 4.2 Z" fill="#333"/></svg>
<div style="left:1429px;top:85px;width:1px;height:14px;background:#d4d8dc"></div>
<svg style="position:absolute;left:1436px;top:81px;" width="22" height="22" viewBox="0 0 22 22"><ellipse cx="11.5" cy="19.5" rx="5" ry="1.3" fill="#cfd3d6"/><path d="M18.5 2 L12.5 9" stroke="#b8524a" stroke-width="2.4" stroke-linecap="round"/><ellipse cx="9.5" cy="13.5" rx="3.8" ry="6.6" transform="rotate(40 9.5 13.5)" fill="#dcbc68"/><path d="M8 10 L13 13.5 M7 12.5 L11.5 16" stroke="#a88032" stroke-width="1"/></svg>
<svg style="position:absolute;left:1483px;top:85px;" width="14" height="13" viewBox="0 0 14 13"><path d="M1 1.5 H13 M1 4.5 H13 M1 7.5 H13 M1 10.5 H13" stroke="#b5bbc1" stroke-width="1.1"/></svg>
<div style="left:1501.6px;top:83.80px;line-height:16px;font-size:12.5px;color:#333;letter-spacing:0.367px">List</div>
<svg style="position:absolute;left:1529.5px;top:90px;" width="7" height="5" viewBox="0 0 7 5"><path d="M0.5 0.8 L6.5 0.8 L3.5 4.2 Z" fill="#333"/></svg>
<div style="left:1545px;top:85px;width:1px;height:14px;background:#d4d8dc"></div>
<svg style="position:absolute;left:1551px;top:82px;" width="18" height="19" viewBox="0 0 18 19"><path d="M14 5 A6.5 6.5 0 1 0 15 12" stroke="#c9d3e3" stroke-width="2.4" fill="none"/><path d="M11 3 L16 3 L16 8 Z" fill="#c9d3e3"/></svg>
<div style="left:1182px;top:104px;width:394px;height:25.5px;background:#f2f5f7;border-bottom:1px solid #e1e4e7;box-sizing:border-box"></div>
<div style="left:1190.3px;top:107.20px;line-height:16px;font-size:12.5px;color:#333">R</div>
<svg style="position:absolute;left:1204.5px;top:114px;" width="7" height="5" viewBox="0 0 7 5"><path d="M0.5 0.8 L6.5 0.8 L3.5 4.2 Z" fill="#333"/></svg>
<div style="left:1216px;top:108px;width:1px;height:15px;background:#d4d8dc"></div>
<svg style="position:absolute;left:1229px;top:106px;" width="20" height="19" viewBox="0 0 20 19"><rect x="6" y="1" width="11" height="11" rx="2" fill="#a35ec9"/><rect x="8" y="6" width="11" height="11" rx="2" fill="#5b8fd9"/><rect x="1" y="4" width="11" height="11" rx="2" fill="#9fc27a"/></svg>
<div style="left:1251.6000000000001px;top:107.20px;line-height:16px;font-size:12.5px;color:#333;letter-spacing:0.188px">Global Environment</div>
<svg style="position:absolute;left:1372.5px;top:114px;" width="7" height="5" viewBox="0 0 7 5"><path d="M0.5 0.8 L6.5 0.8 L3.5 4.2 Z" fill="#333"/></svg>
<div style="left:1443px;top:108px;width:133px;height:18px;background:#fff;border:1px solid #dde1e5;border-radius:3px;box-sizing:border-box"></div>
<svg style="position:absolute;left:1450px;top:110px;" width="15" height="15" viewBox="0 0 15 15"><circle cx="6" cy="6" r="4.3" fill="none" stroke="#8a9096" stroke-width="1.6"/><path d="M9.3 9.3 L13 13" stroke="#8a9096" stroke-width="2" stroke-linecap="round"/></svg>
<div style="left:1321.0px;top:170.00px;line-height:14px;font-size:11.5px;color:#333;letter-spacing:0.653px">Environment is empty</div>
<div style="left:1181px;top:366px;width:395px;height:516px;background:linear-gradient(#e4e6e8 0 25px,#fff 25px);border:1px solid #e0e3e6;border-right:none;border-bottom:none;border-radius:5px 0 0 0;box-sizing:border-box"></div>
<div style="left:1182px;top:367px;width:394px;height:23px;background:#e4e6e8"></div>
<div style="left:1231px;top:367px;width:49px;height:23px;background:#f2f5f7"></div>
<div style="left:1182px;top:367px;width:49px;height:23px;background:#eaeaea;border:1px solid #dcdddf;border-bottom:none;border-left:none;border-radius:0 3px 0 0"></div>
<div style="left:1280px;top:367px;width:78px;height:23px;background:#eaeaea;border:1px solid #dcdddf;border-bottom:none;border-left:none;border-radius:0 3px 0 0"></div>
<div style="left:1358px;top:367px;width:49px;height:23px;background:#eaeaea;border:1px solid #dcdddf;border-bottom:none;border-left:none;border-radius:0 3px 0 0"></div>
<div style="left:1407px;top:367px;width:97px;height:23px;background:#eaeaea;border:1px solid #dcdddf;border-bottom:none;border-left:none;border-radius:0 3px 0 0"></div>
<div style="left:1191.4px;top:368.90px;line-height:16px;font-size:12px;color:#222;letter-spacing:0.375px;font-weight:bold">Files</div>
<div style="left:1239.6000000000001px;top:368.90px;line-height:16px;font-size:12px;color:#222;letter-spacing:0.425px;font-weight:bold">Plots</div>
<div style="left:1290.6000000000001px;top:368.90px;line-height:16px;font-size:12px;color:#222;letter-spacing:0.257px;font-weight:bold">Packages</div>
<div style="left:1367.8px;top:368.90px;line-height:16px;font-size:12px;color:#222;letter-spacing:0.933px;font-weight:bold">Help</div>
<div style="left:1416.0px;top:368.90px;line-height:16px;font-size:12px;color:#222;letter-spacing:0.545px;font-weight:bold">Presentation</div>
<svg style="position:absolute;left:1539px;top:373px;" width="38" height="15" viewBox="0 0 38 15"><rect x="0.9" y="8.2" width="14.6" height="5.2" rx="1.3" fill="#e9ebec" stroke="#7f868c" stroke-width="1.3"/><rect x="0.9" y="8.2" width="14.6" height="1.8" fill="#7f868c"/><rect x="20.6" y="1.8" width="14" height="11.6" rx="1.3" fill="#eceeef" stroke="#7f868c" stroke-width="1.3"/><rect x="20.6" y="1.8" width="14" height="2.6" fill="#7f868c"/></svg>
<div style="left:1182px;top:390px;width:394px;height:24px;background:#f2f5f7;border-bottom:1px solid #e1e4e7;box-sizing:border-box"></div>
<svg style="position:absolute;left:1189px;top:395px;" width="48" height="15" viewBox="0 0 48 15"><path d="M1 7.5 L7.5 1 V4 H16 V11 H7.5 V14 Z" fill="#d3e5f1" stroke="#c6dcec" stroke-width="0.8"/><path d="M46 7.5 L39.5 1 V4 H30 V11 H39.5 V14 Z" fill="#d3e5f1" stroke="#c6dcec" stroke-width="0.8"/></svg>
<div style="left:1241px;top:395px;width:1px;height:14px;background:#d4d8dc"></div>
<svg style="position:absolute;left:1250px;top:393px;" width="18" height="18" viewBox="0 0 18 18"><circle cx="11" cy="6.5" r="5" fill="#e4f3f0" stroke="#b9cdd0" stroke-width="1"/><path d="M11 4 V9 M8.5 6.5 H13.5" stroke="#8ccbbb" stroke-width="1.4"/><path d="M7.5 10 L2 16" stroke="#d2c6b4" stroke-width="2" stroke-linecap="round"/></svg>
<div style="left:1272.7px;top:394.40px;line-height:16px;font-size:12.5px;color:#b9bdc2;letter-spacing:0.333px">Zoom</div>
<div style="left:1316px;top:395px;width:1px;height:14px;background:#d4d8dc"></div>
<svg style="position:absolute;left:1322px;top:393px;" width="22" height="17" viewBox="0 0 22 17"><path d="M1 8.5 H6" stroke="#555" stroke-width="1.2"/><rect x="5" y="3" width="16" height="12" fill="#f3d36b" stroke="#d4d9de"/><path d="M5 9 L11 5 L21 9 V3 H5 Z" fill="#5ea2e0"/><path d="M5 15 L11 9 L21 13 V15 Z" fill="#e9b33f"/></svg>
<div style="left:1345.0px;top:394.40px;line-height:16px;font-size:12.5px;color:#333;letter-spacing:0.340px">Export</div>
<svg style="position:absolute;left:1389.5px;top:400px;" width="7" height="5" viewBox="0 0 7 5"><path d="M0.5 0.8 L6.5 0.8 L3.5 4.2 Z" fill="#333"/></svg>
<div style="left:1405px;top:395px;width:1px;height:14px;background:#d4d8dc"></div>
<svg style="position:absolute;left:1412px;top:395px;" width="16" height="14" viewBox="0 0 16 14"><rect x="6" y="4" width="9" height="9" fill="#fff"/><circle cx="6.5" cy="6.5" r="5" fill="none" stroke="#e6a3a3" stroke-width="1.5"/><path d="M4.5 4.5 L8.5 8.5 M8.5 4.5 L4.5 8.5" stroke="#e6a3a3" stroke-width="1.3"/></svg>
<div style="left:1440px;top:395px;width:1px;height:14px;background:#d4d8dc"></div>
<svg style="position:absolute;left:1447px;top:392px;" width="22" height="20" viewBox="0 0 22 20"><path d="M19 2 L11 12" stroke="#e8c7c0" stroke-width="2"/><path d="M11 10 L5 17 Q7 20 10 19 L14 14 Z" fill="#ecdcb8"/></svg>
<svg style="position:absolute;left:1560px;top:393px;" width="16" height="18" viewBox="0 0 16 18"><path d="M13 5 A6 6 0 1 0 14 12" stroke="#e3e8ee" stroke-width="2" fill="none"/></svg>
</body></html>
